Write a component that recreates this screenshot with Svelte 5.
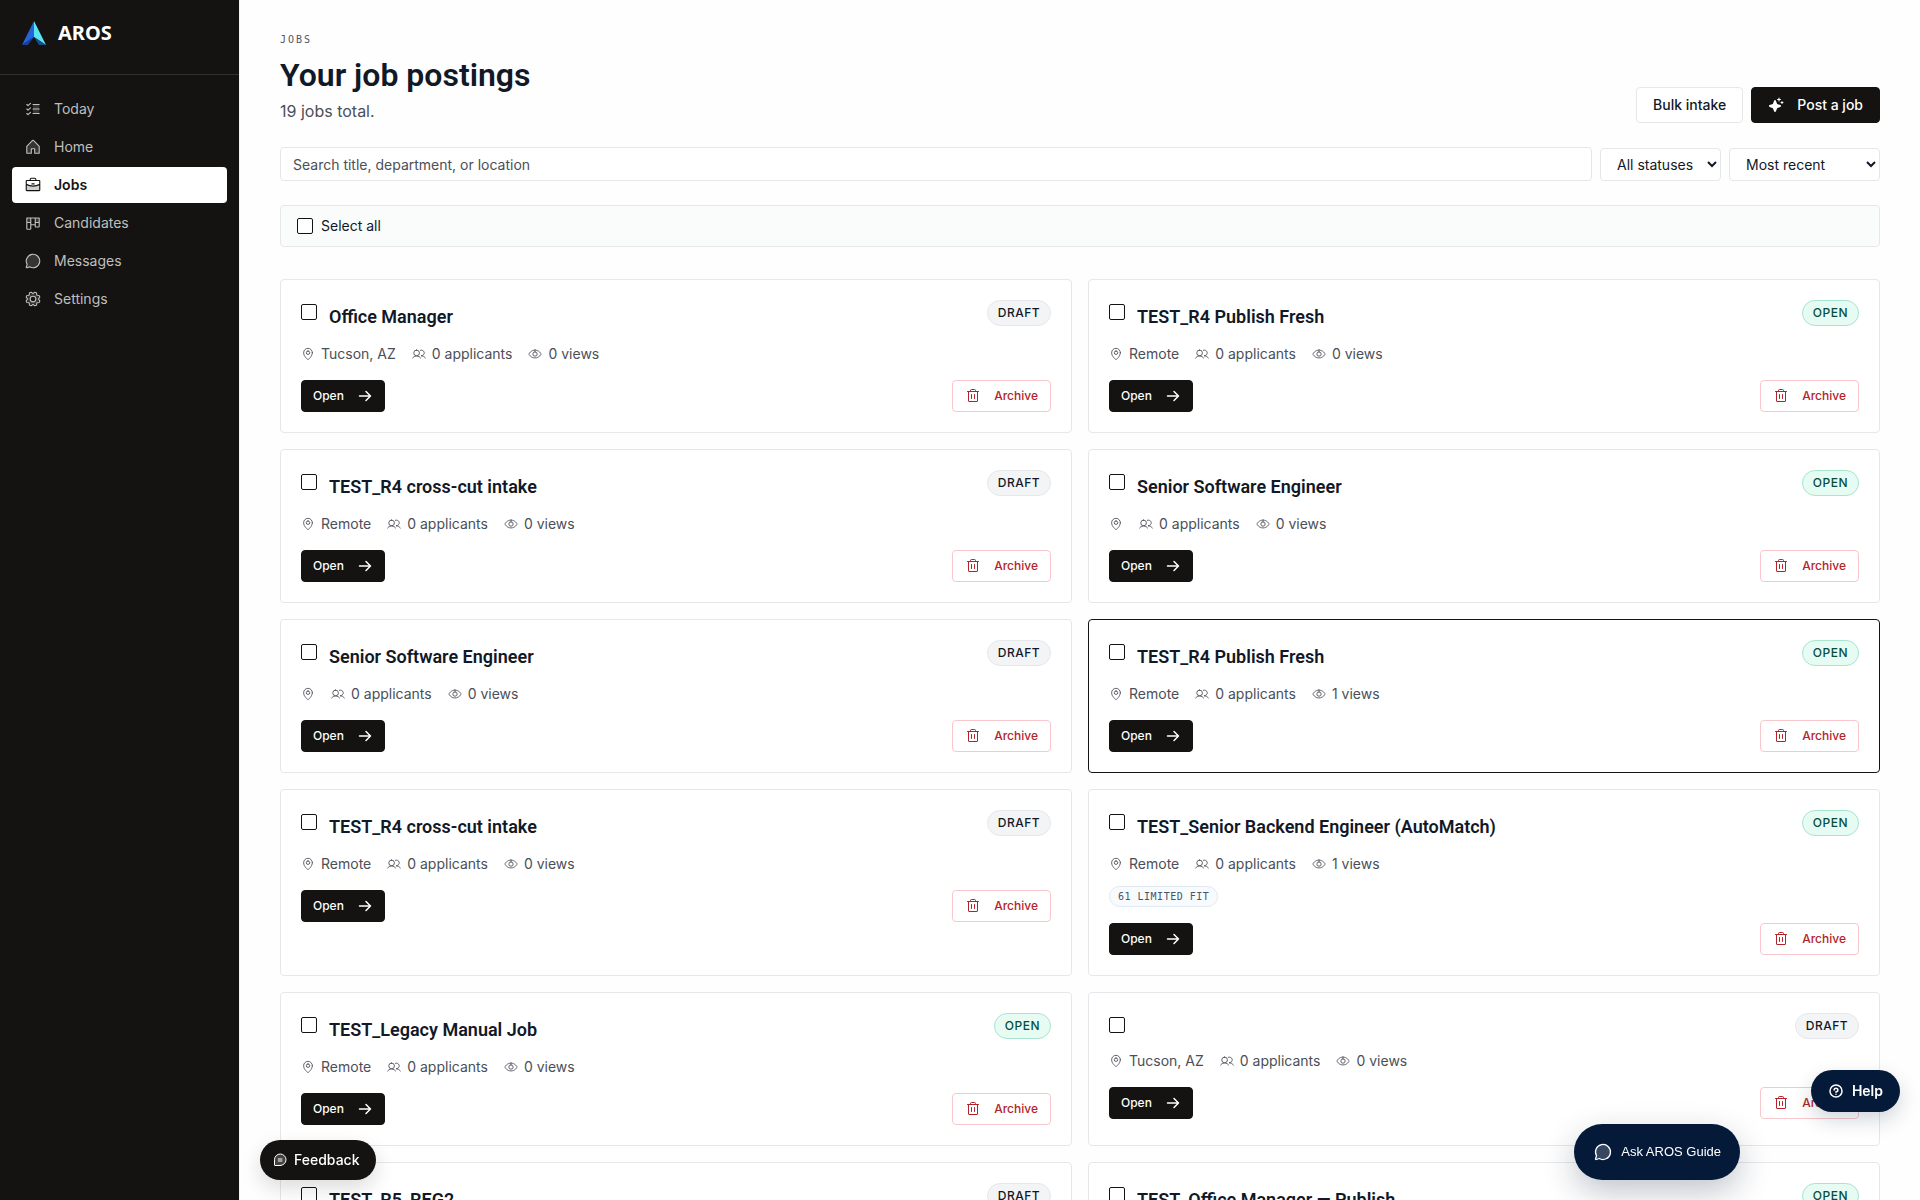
<script>
  const icons = {
    checks: {
      tone: 'M128 64H216V192H128Z',
      line: 'M128 64H216M128 128H216M128 192H216M92 48L57 80L40 64M92 112L57 144L40 128M92 176L57 208L40 192'
    },
    house: {
      tone: 'M152 216V152H104V216H40V120L128 32L216 120V216Z',
      line: 'M104 216V152H152V216H216V120A8 8 0 0 0 213.7 114.3L133.7 34.3A8 8 0 0 0 122.3 34.3L42.3 114.3A8 8 0 0 0 40 120V216Z'
    },
    briefcase: {
      tone: 'M128 144A191 191 0 0 1 32 118V200A8 8 0 0 0 40 208H216A8 8 0 0 0 224 200V118A191 191 0 0 1 128 144Z',
      line: 'M40 64H216A8 8 0 0 1 224 72V200A8 8 0 0 1 216 208H40A8 8 0 0 1 32 200V72A8 8 0 0 1 40 64ZM168 64V48A16 16 0 0 0 152 32H104A16 16 0 0 0 88 48V64M224 118A191 191 0 0 1 128 144A191 191 0 0 1 32 118M112 112H144'
    },
    kanban: {
      tone: 'M40 56H96V120H40ZM160 56H216V120H160Z',
      line: 'M40 56H216V176A8 8 0 0 1 208 184H168A8 8 0 0 1 160 176V152H96V208A8 8 0 0 1 88 216H48A8 8 0 0 1 40 208ZM96 56V152M160 56V152M40 120H96M160 120H216'
    },
    chat: {
      tone: 'M79.9 211.1A96 96 0 1 0 44.9 176.1L32.4 213.5A8 8 0 0 0 42.5 223.6Z',
      line: 'M79.9 211.1A96 96 0 1 0 44.9 176.1L32.4 213.5A8 8 0 0 0 42.5 223.6Z'
    },
    gear: {
      tone: 'M128 48A80 80 0 1 0 128 208A80 80 0 1 0 128 48ZM128 88A40 40 0 1 1 128 168A40 40 0 1 1 128 88Z',
      line: 'M128 88A40 40 0 1 1 128 168A40 40 0 1 1 128 88ZM41.43 178.09A99.14 99.14 0 0 1 31.36 153.8l16.78-21a81.59 81.59 0 0 1 0-9.64l-16.77-21a99.43 99.43 0 0 1 10.05-24.3l26.71-3a81 81 0 0 1 6.81-6.81l3-26.7A99.14 99.14 0 0 1 102.2 31.36l21 16.78a81.59 81.59 0 0 1 9.64 0l21-16.77a99.43 99.43 0 0 1 24.3 10.05l3 26.71a81 81 0 0 1 6.81 6.81l26.7 3a99.14 99.14 0 0 1 10.07 24.29l-16.78 21a81.59 81.59 0 0 1 0 9.64l16.77 21a99.43 99.43 0 0 1-10 24.3l-26.71 3a81 81 0 0 1-6.81 6.81l-3 26.7a99.14 99.14 0 0 1-24.29 10.07l-21-16.78a81.59 81.59 0 0 1-9.64 0l-21 16.77a99.43 99.43 0 0 1-24.3-10l-3-26.71a81 81 0 0 1-6.81-6.81Z'
    },
    pin: {
      tone: '',
      line: 'M128 72A32 32 0 1 1 128 136A32 32 0 1 1 128 72ZM208 104C208 176 128 232 128 232S48 176 48 104A80 80 0 0 1 208 104Z'
    },
    users: {
      tone: '',
      line: 'M84 56A52 52 0 1 1 84 160A52 52 0 1 1 84 56ZM10 200A88 88 0 0 1 158 200M172 160A88 88 0 0 1 246 200M152.7 59.7A52 52 0 1 1 172 160'
    },
    eye: {
      tone: '',
      line: 'M128 56C48 56 16 128 16 128S48 200 128 200S240 128 240 128S208 56 128 56ZM128 88A40 40 0 1 1 128 168A40 40 0 1 1 128 88Z'
    },
    trash: {
      tone: '',
      line: 'M216 56H40M104 104V168M152 104V168M200 56V208A8 8 0 0 1 192 216H64A8 8 0 0 1 56 208V56M168 56V40A16 16 0 0 0 152 24H104A16 16 0 0 0 88 40V56'
    },
    arrow: { tone: '', line: 'M40 128H216M144 56L216 128L144 200' },
    question: {
      tone: '',
      line: 'M128 32A96 96 0 1 1 128 224A96 96 0 1 1 128 32ZM128 146V138C146 138 158 126 158 110S146 82 128 82S98 94 98 110M128 178V180'
    },
    note: {
      tone: 'M132 216H40V124A92 92 0 0 1 132 32A92 92 0 0 1 132 216Z',
      line: 'M132 216H47.7A7.7 7.7 0 0 1 40 208.3V124A92 92 0 0 1 132 32A92 92 0 0 1 132 216ZM100 112H160M100 144H160'
    }
  }

  const nav = [
    { label: 'Today', icon: 'checks' },
    { label: 'Home', icon: 'house' },
    { label: 'Jobs', icon: 'briefcase' },
    { label: 'Candidates', icon: 'kanban' },
    { label: 'Messages', icon: 'chat' },
    { label: 'Settings', icon: 'gear' }
  ]

  let jobs = $state([
    { title: 'Office Manager', status: 'Draft', place: 'Tucson, AZ', views: 0 },
    { title: 'TEST_R4 Publish Fresh', status: 'Open', place: 'Remote', views: 0 },
    { title: 'TEST_R4 cross-cut intake', status: 'Draft', place: 'Remote', views: 0 },
    { title: 'Senior Software Engineer', status: 'Open', place: '', views: 0 },
    { title: 'Senior Software Engineer', status: 'Draft', place: '', views: 0 },
    { title: 'TEST_R4 Publish Fresh', status: 'Open', place: 'Remote', views: 1, active: true },
    { title: 'TEST_R4 cross-cut intake', status: 'Draft', place: 'Remote', views: 0 },
    { title: 'TEST_Senior Backend Engineer (AutoMatch)', status: 'Open', place: 'Remote', views: 1, fit: '61 Limited fit' },
    { title: 'TEST_Legacy Manual Job', status: 'Open', place: 'Remote', views: 0 },
    { title: '', status: 'Draft', place: 'Tucson, AZ', views: 0 },
    { title: 'TEST_R5_REG2', status: 'Draft', place: 'Remote', views: 0 },
    { title: 'TEST_Office Manager — Publish', status: 'Open', place: 'Remote', views: 0 }
  ])

  let search = $state('')

  function selectAll(e) {
    jobs.forEach(job => job.checked = e.target.checked)
  }
</script>

{#snippet icon(name, size, weight = 16)}
  <svg class="icon" width={size} height={size} viewBox="0 0 256 256" aria-hidden="true">
    {#if icons[name].tone}
      <path class="tone" d={icons[name].tone} />
    {/if}
    <path class="line" stroke-width={weight} d={icons[name].line} />
  </svg>
{/snippet}

<div class="app">
  <aside>
    <a class="brand" href="#home">
      <svg width="26" height="24" viewBox="0 0 26 24" aria-hidden="true">
        <path fill="#2563d8" d="M13 0V16L1 24Z" />
        <path fill="#5be3f2" d="M13 0L25 24L13 16Z" />
        <path fill="#1b3f9e" d="M13 16L1 24H7Z" />
        <path fill="#12508c" d="M13 16L25 24H18Z" />
      </svg>
      <span>AROS</span>
    </a>
    <nav>
      {#each nav as item}
        <a href="#{item.label.toLowerCase()}" class:current={item.label == 'Jobs'}>
          {@render icon(item.icon, 18)}
          {item.label}
        </a>
      {/each}
    </nav>
  </aside>

  <main>
    <header>
      <div>
        <p class="eyebrow">JOBS</p>
        <h1>Your job postings</h1>
        <p class="total">19 jobs total.</p>
      </div>
      <div class="actions">
        <button class="btn">Bulk intake</button>
        <button class="btn dark">
          <svg width="16" height="16" viewBox="0 0 256 256" aria-hidden="true">
            <path fill="currentColor" d="M208 144a15.8 15.8 0 0 1-10.4 15L146 178l-19 51.6a15.9 15.9 0 0 1-29.9 0L78 178l-51.6-19a15.9 15.9 0 0 1 0-29.9L78 110l19-51.6a15.9 15.9 0 0 1 29.9 0L146 110l51.6 19A15.8 15.8 0 0 1 208 144ZM152 48h16v16a8 8 0 0 0 16 0V48h16a8 8 0 0 0 0-16H184V16a8 8 0 0 0-16 0V32H152a8 8 0 0 0 0 16Zm88 32h-8V72a8 8 0 0 0-16 0v8h-8a8 8 0 0 0 0 16h8v8a8 8 0 0 0 16 0V96h8a8 8 0 0 0 0-16Z" />
          </svg>
          Post a job
        </button>
      </div>
    </header>

    <form class="filters" onsubmit={e => e.preventDefault()}>
      <input type="search" aria-label="Search jobs" placeholder="Search title, department, or location" bind:value={search} />
      <select class="status" aria-label="Status">
        <option>All statuses</option>
        <option>Open</option>
        <option>Draft</option>
      </select>
      <select class="sort" aria-label="Sort">
        <option>Most recent</option>
        <option>Most applicants</option>
      </select>
    </form>

    <label class="select-all">
      <input type="checkbox" onchange={selectAll} />
      Select all
    </label>

    <section class="grid">
      {#each jobs as job}
        <article class:active={job.active}>
          <div class="top">
            <input type="checkbox" aria-label="Select {job.title || 'job'}" bind:checked={job.checked} />
            {#if job.title}
              <h2>{job.title}</h2>
            {/if}
            <span class="badge {job.status.toLowerCase()}">{job.status}</span>
          </div>
          <div class="meta">
            <span>{@render icon('pin', 14)}{job.place}</span>
            <span>{@render icon('users', 14)}0 applicants</span>
            <span>{@render icon('eye', 14)}{job.views} views</span>
          </div>
          {#if job.fit}
            <span class="fit">{job.fit}</span>
          {/if}
          <div class="buttons">
            <button class="btn small dark">Open {@render icon('arrow', 16, 24)}</button>
            <button class="btn small danger">{@render icon('trash', 16)} Archive</button>
          </div>
        </article>
      {/each}
    </section>
  </main>
</div>

<button class="float feedback">{@render icon('note', 16)} Feedback</button>
<button class="float guide">{@render icon('chat', 20)} Ask AROS Guide</button>
<button class="float help">{@render icon('question', 16, 24)} Help</button>

<style>
  :global(body) {
    background: #fefefe;
  }
  *, *::before, *::after {
    box-sizing: border-box;
  }
  .app {
    display: flex;
    height: 100vh;
    color: #111827;
    font: 14px/20px Inter, sans-serif;
  }
  h1, h2, p {
    margin: 0;
  }
  button, input, select {
    font: inherit;
    color: inherit;
  }
  .icon {
    flex: none;
    overflow: visible;
  }
  .line {
    fill: none;
    stroke: currentColor;
    stroke-linecap: round;
    stroke-linejoin: round;
  }
  .tone {
    fill: currentColor;
    fill-rule: evenodd;
    opacity: .2;
  }

  aside {
    flex: none;
    width: 240px;
    background: #141311;
    border-right: 1px solid #f3f4f6;
  }
  .brand {
    display: flex;
    align-items: center;
    gap: 11px;
    height: 75px;
    padding: 0 21px 8px;
    border-bottom: 1px solid #30302e;
    color: #fff;
    font: 700 20px/24px "Noto Sans", sans-serif;
    text-decoration: none;
  }
  nav {
    display: flex;
    flex-direction: column;
    gap: 2px;
    padding: 16px 12px;
  }
  nav a {
    display: flex;
    align-items: center;
    gap: 12px;
    height: 36px;
    padding: 0 12px;
    border-radius: 4px;
    color: #bfbfbe;
    text-decoration: none;
  }
  nav .current {
    background: #fff;
    color: #141311;
    font-weight: 600;
  }

  main {
    flex: 1;
    padding: 32px 40px;
    overflow-y: auto;
    scrollbar-width: none;
  }
  header {
    display: flex;
    justify-content: space-between;
    align-items: flex-end;
    margin-bottom: 24px;
  }
  .eyebrow {
    color: #4b5563;
    font: 10px/16px "DejaVu Sans Mono", monospace;
    letter-spacing: 2px;
  }
  h1 {
    margin: 7px 0 4px;
    font: 600 32px/40px Roboto, sans-serif;
  }
  .total {
    color: #4b4f58;
    font-size: 16px;
    line-height: 24px;
  }
  .actions {
    display: flex;
    gap: 8px;
  }
  .btn {
    display: flex;
    align-items: center;
    gap: 13px;
    height: 36px;
    padding: 0 16px;
    background: #fff;
    border: 1px solid #e5e7eb;
    border-radius: 4px;
    font-weight: 500;
  }
  .btn.dark {
    background: #141311;
    border-color: #141311;
    color: #fff;
  }
  .btn.small {
    height: 32px;
    padding: 0 11px;
    font-size: 12px;
  }
  .btn.danger {
    padding: 0 12px;
    border-color: #f8c6cb;
    color: #b4232a;
  }

  .filters {
    display: flex;
    align-items: flex-end;
    gap: 8px;
    margin-bottom: 24px;
  }
  .filters input, select {
    background: #fff;
    border: 1px solid #e5e7eb;
    border-radius: 4px;
  }
  .filters input {
    flex: 1;
    height: 34px;
    padding: 0 12px;
  }
  .filters input::placeholder {
    color: #4b4f58;
    opacity: 1;
  }
  select {
    height: 33px;
    padding: 0 0 0 12px;
  }
  .status {
    width: 121px;
  }
  .sort {
    width: 151px;
  }

  input[type="checkbox"] {
    flex: none;
    appearance: none;
    width: 16px;
    height: 16px;
    margin: 0;
    background: #fff;
    border: 1px solid #141311;
    border-radius: 2px;
  }
  input[type="checkbox"]:checked {
    background: #141311;
  }
  .select-all {
    display: flex;
    align-items: center;
    gap: 8px;
    height: 42px;
    padding: 0 16px;
    background: #fafbfb;
    border: 1px solid #e5e7eb;
    border-radius: 4px;
  }

  .grid {
    display: grid;
    grid-template-columns: 1fr 1fr;
    gap: 16px;
    margin-top: 32px;
  }
  article {
    padding: 20px;
    background: #fff;
    border: 1px solid #e5e7eb;
    border-radius: 4px;
  }
  article.active {
    border-color: #141311;
  }
  .top {
    display: flex;
    align-items: flex-start;
    gap: 12px;
  }
  .top input {
    margin-top: 4px;
  }
  h2 {
    padding: 5px 0 3px;
    font: 600 18px/24px Roboto, sans-serif;
  }
  .badge {
    height: 26px;
    margin-left: auto;
    padding: 0 10px;
    border: 1px solid #e5e7eb;
    border-radius: 13px;
    background: #f3f4f6;
    font-size: 12px;
    font-weight: 500;
    line-height: 24px;
    letter-spacing: .04em;
    text-transform: uppercase;
  }
  .badge.open {
    background: #e6fcf3;
    border-color: #a7e5cf;
    color: #064e3b;
  }
  .meta {
    display: flex;
    gap: 16px;
    margin-top: 12px;
    color: #4b4f58;
  }
  .meta span {
    display: flex;
    align-items: center;
    gap: 6px;
  }
  .fit {
    display: block;
    width: fit-content;
    margin-top: 12px;
    padding: 0 8px;
    background: #f8fbfe;
    border: 1px solid #e2e8f0;
    border-radius: 11px;
    color: #475569;
    font: 10px/19px "DejaVu Sans Mono", monospace;
    letter-spacing: .05em;
    text-transform: uppercase;
  }
  .buttons {
    display: flex;
    justify-content: space-between;
    margin-top: 16px;
  }

  .float {
    position: fixed;
    display: flex;
    align-items: center;
    gap: 8px;
    border: 0;
    border-radius: 28px;
    background: #051a38;
    color: #fff;
    font: 500 14px/20px Inter, sans-serif;
  }
  .feedback {
    left: 260px;
    bottom: 20px;
    gap: 6px;
    height: 40px;
    padding: 0 16px 0 12px;
    background: #141311;
    box-shadow: 0 8px 20px rgba(20, 19, 17, .15);
  }
  .guide {
    right: 180px;
    bottom: 20px;
    height: 56px;
    padding: 0 19px;
    font: 13px/20px "Liberation Sans", sans-serif;
    box-shadow: 0 12px 32px rgba(5, 26, 56, .25);
  }
  .help {
    right: 20px;
    bottom: 88px;
    height: 42px;
    padding: 0 17px;
    font-weight: 600;
    box-shadow: 0 8px 20px rgba(5, 26, 56, .18);
  }
</style>
